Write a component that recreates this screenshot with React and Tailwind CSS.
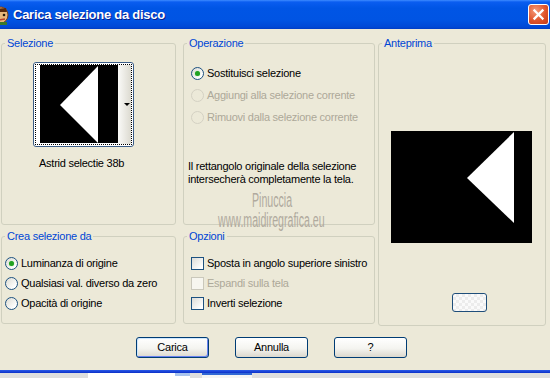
import React from "react";

function Radio({ checked, disabled }) {
  return (
    <span
      className={`w-[13px] h-[13px] shrink-0 rounded-full border flex items-center justify-center ${
        disabled
          ? "border-[#D4D1C3] bg-[#ECE9D8]"
          : "border-[#1C5180] bg-[linear-gradient(135deg,#DCDBD3,#FFFFFF_80%)]"
      }`}
    >
      {checked && <span className="w-[5px] h-[5px] rounded-full bg-[#21A121] shadow-[0_0_1px_#7EDD7E]" />}
    </span>
  );
}

function Check({ disabled }) {
  return (
    <span
      className={`w-[13px] h-[13px] shrink-0 border ${
        disabled
          ? "border-[#CAC8BB] bg-[#F7F6EF]"
          : "border-[#1C5180] bg-[linear-gradient(135deg,#DCDCD7,#FFFFFF_85%)]"
      }`}
    />
  );
}

function Group({ title, className, children }) {
  return (
    <fieldset className={`border border-[#D0D0BF] rounded-[3px] ${className}`}>
      <legend className="ml-[3px] px-[2px] leading-[13px] text-[#0046D5]">{title}</legend>
      {children}
    </fieldset>
  );
}

function Option({ children, control, disabled, h = "h-[20px]" }) {
  return (
    <div className={`flex items-center gap-[3px] ${h} ${disabled ? "text-[#ACA899]" : ""}`}>
      {control}
      <span>{children}</span>
    </div>
  );
}

function Button({ children, primary }) {
  return (
    <button
      className={`w-[73px] h-[21px] rounded-[3px] border border-[#003C74] bg-[linear-gradient(to_bottom,#FFFFFF,#F4F4F0_55%,#DCD8CD)] leading-none ${
        primary ? "shadow-[inset_1px_1px_0_#CEE7FF,inset_-1px_-1px_0_#6982EE]" : ""
      }`}
    >
      {children}
    </button>
  );
}

function TitleBar() {
  return (
    <div className="h-[29px] shrink-0 flex items-center bg-[linear-gradient(to_bottom,#3D8BFF_0px,#0A5DF0_2px,#0055E5_8px,#0054E3_20px,#0049D6_27px,#003CC4_29px)]">
      <svg width="10" height="20" viewBox="0 0 10 20" className="shrink-0">
        <ellipse cx="1" cy="10" rx="7" ry="8" fill="#E9B67A" stroke="#7A3A12" strokeWidth="1" />
        <path d="M-4 4 L6 3 L7 7 L-3 7 Z" fill="#5A2A0E" />
        <circle cx="4" cy="10" r="1.3" fill="#2A1A0A" />
        <path d="M-2 15 L5 14" stroke="#B5402A" strokeWidth="1.5" />
        <rect x="-2" y="17" width="9" height="3" fill="#3A7A2A" />
      </svg>
      <span className="ml-[3px] text-white font-bold text-[13px] font-['Liberation_Sans',Arial,sans-serif] [text-shadow:1px_1px_0_#0A1E8C]">
        Carica selezione da disco
      </span>
      <div className="ml-auto mr-[1px] w-[21px] h-[21px] rounded-[3px] border border-white bg-[radial-gradient(circle_at_35%_30%,#F59A7A,#E0552C_55%,#C23A18)] flex items-center justify-center">
        <svg width="13" height="13" viewBox="0 0 13 13">
          <path d="M2.5 2.5 L10.5 10.5 M10.5 2.5 L2.5 10.5" stroke="#FFFFFF" strokeWidth="2.3" strokeLinecap="square" />
        </svg>
      </div>
    </div>
  );
}

function Thumbnail() {
  return (
    <div className="ml-[31px] mt-[12px] w-[101px] h-[85px] rounded-[3px] border border-[#3A5C86] bg-white p-[1px]">
      <div className="w-full h-full border border-dotted border-black flex">
        <div className="w-[4px] bg-white" />
        <svg width="78" height="78" viewBox="0 0 78 78" className="shrink-0">
          <rect width="78" height="78" fill="#000" />
          <polygon points="20,40 58,1 58,78" fill="#fff" />
        </svg>
        <div className="flex-1 flex items-center justify-end pr-[1px] bg-[linear-gradient(to_right,#FAFAF8,#DCDAD0)]">
          <span className="w-0 h-0 border-l-[3px] border-r-[3px] border-t-[3px] border-l-transparent border-r-transparent border-t-black" />
        </div>
      </div>
    </div>
  );
}

export default function App() {
  return (
    <div className="relative w-[550px] h-[378px] overflow-hidden flex flex-col bg-[#ECE9D8] text-[11px] tracking-[-0.25px] text-black font-['Liberation_Sans',Arial,sans-serif]">
      <TitleBar />

      <div className="flex-1 flex flex-col">
        <div className="flex pt-[8px] pl-[1px]">
          <div className="w-[175px] flex flex-col">
            <Group title="Selezione" className="h-[188px]">
              <Thumbnail />
              <div className="ml-[37px] mt-[10px] leading-[13px]">Astrid selectie 38b</div>
            </Group>
            <Group title="Crea selezione da" className="mt-[5px] h-[94px]">
              <div className="ml-[3px] mt-[10px]">
                <Option control={<Radio checked />}>Luminanza di origine</Option>
                <Option control={<Radio />}>Qualsiasi val. diverso da zero</Option>
                <Option control={<Radio />}>Opacità di origine</Option>
              </div>
            </Group>
          </div>

          <div className="ml-[7px] w-[192px] flex flex-col">
            <Group title="Operazione" className="h-[188px]">
              <div className="ml-[7px] mt-[12px]">
                <Option h="h-[22px]" control={<Radio checked />}>Sostituisci selezione</Option>
                <Option h="h-[22px]" disabled control={<Radio disabled />}>Aggiungi alla selezione corrente</Option>
                <Option h="h-[22px]" disabled control={<Radio disabled />}>Rimuovi dalla selezione corrente</Option>
              </div>
              <p className="ml-[4px] mt-[32px] leading-[13px]">
                Il rettangolo originale della selezione
                <br />
                intersecherà completamente la tela.
              </p>
            </Group>
            <Group title="Opzioni" className="mt-[5px] h-[94px]">
              <div className="ml-[7px] mt-[10px]">
                <Option control={<Check />}>Sposta in angolo superiore sinistro</Option>
                <Option disabled control={<Check disabled />}>Espandi sulla tela</Option>
                <Option control={<Check />}>Inverti selezione</Option>
              </div>
            </Group>
          </div>

          <div className="ml-[3px] w-[168px]">
            <Group title="Anteprima" className="h-[289px]">
              <svg width="141" height="112" viewBox="0 0 141 112" className="block ml-[12px] mt-[81px]">
                <rect width="141" height="112" fill="#000" />
                <polygon points="76,47 123,1 123,92" fill="#fff" />
              </svg>
              <div className="ml-[73px] mt-[50px] w-[35px] h-[19px] rounded-[3px] border border-[#1F4E7A] bg-[conic-gradient(#ECECEC_25%,#FAFAFA_0_50%,#ECECEC_0_75%,#FAFAFA_0)] bg-[length:6px_6px]" />
            </Group>
          </div>
        </div>

        <div className="flex gap-[26px] ml-[136px] mt-[11px]">
          <Button primary>Carica</Button>
          <Button>Annulla</Button>
          <Button>?</Button>
        </div>
      </div>

      <div className="h-[3px] shrink-0 bg-[linear-gradient(to_bottom,#2A5AE8,#0B2FC8)]" />
      <div className="h-[5px] shrink-0 flex bg-[#DEDEDE]">
        <div className="ml-[88px] w-[102px] bg-white flex justify-end">
          <div className="w-[15px] h-[3px] bg-[#A9C4EE]" />
        </div>
        <div className="ml-[12px] w-[50px] bg-[#F4F4F4] border-t-2 border-[#3168D5]" />
      </div>

      <div className="absolute left-[252px] top-[190px] text-[20px] leading-[20px] tracking-normal text-[#B0AA9E] scale-x-[0.53] origin-left whitespace-nowrap">
        Pinuccia
      </div>
      <div className="absolute left-[218px] top-[210px] text-[20px] leading-[20px] tracking-normal text-[#B0AA9E] scale-x-[0.53] origin-left whitespace-nowrap">
        www.maidiregrafica.eu
      </div>
    </div>
  );
}
